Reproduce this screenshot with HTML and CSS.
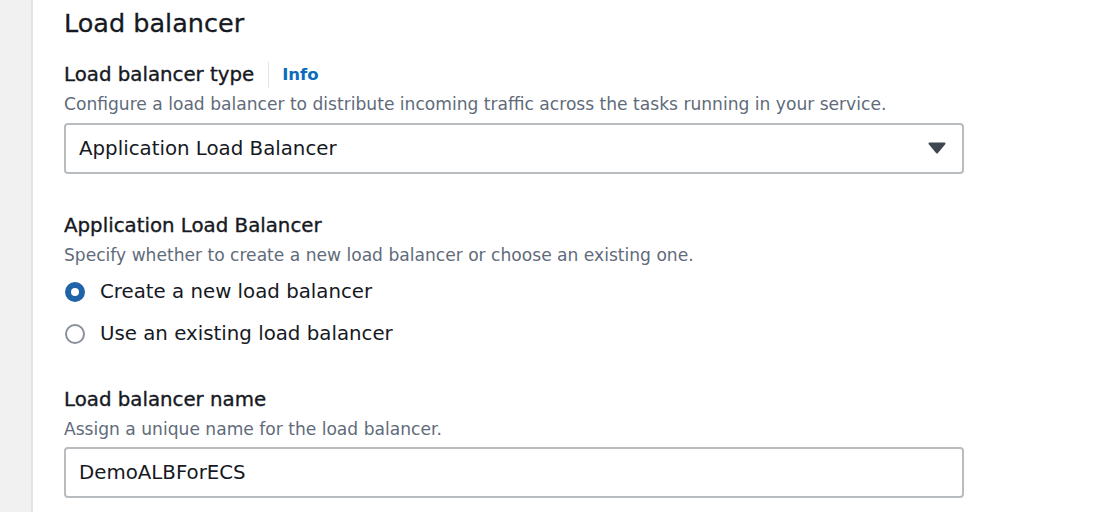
FILE: index.html
```
<!DOCTYPE html>
<html>
<head>
<meta charset="utf-8">
<link rel="stylesheet" href="styles.css">
</head>
<body>
<div class="page">
  <div class="rail"></div>
  <div class="panel">
    <h2 class="title">Load balancer</h2>

    <div class="field f1">
      <div class="label">Load balancer type <span class="sep"></span><a class="info">Info</a></div>
      <div class="desc">Configure a load balancer to distribute incoming traffic across the tasks running in your service.</div>
      <div class="select">
        <span>Application Load Balancer</span>
        <svg class="caret" width="18" height="12" viewBox="0 0 18 12"><path d="M1.5 1.5 L16.5 1.5 L9 10.5 Z" fill="#414750" stroke="#414750" stroke-width="2" stroke-linejoin="round"/></svg>
      </div>
    </div>

    <div class="field f2">
      <div class="label">Application Load Balancer</div>
      <div class="desc">Specify whether to create a new load balancer or choose an existing one.</div>
      <div class="radios">
        <div class="radio"><span class="dot on"></span><span>Create a new load balancer</span></div>
        <div class="radio"><span class="dot"></span><span>Use an existing load balancer</span></div>
      </div>
    </div>

    <div class="field f3">
      <div class="label">Load balancer name</div>
      <div class="desc">Assign a unique name for the load balancer.</div>
      <div class="input">DemoALBForECS</div>
    </div>
  </div>
</div>
</body>
</html>
```
FILE: styles.css
```
* { box-sizing: border-box; }
html, body { margin: 0; padding: 0; background: #fff; }
body { font-family: "DejaVu Sans", "Open Sans", sans-serif; color: #16191f; }
.page { display: flex; width: 1114px; height: 512px; overflow: hidden; }
.rail { width: 33px; flex: none; background: #f1f1f1; border-right: 2px solid #e3e3e3; }
.panel { flex: none; width: 930px; padding-left: 31px; }
.title { margin: 6px 0 0; font-size: 25.5px; font-weight: 400; line-height: 34px; color: #16191f; -webkit-text-stroke: 0.3px #16191f; }
.field { display: flex; flex-direction: column; }
.f1 { margin-top: 22px; }
.f2 { margin-top: 39px; }
.f3 { margin-top: 39px; }
.label { font-size: 19.8px; line-height: 26px; font-weight: 400; display: flex; align-items: center; -webkit-text-stroke: 0.35px #16191f; }
.sep { display: inline-block; width: 1px; height: 26px; background: #e4e4e4; margin: 0 13px 0 14px; }
.info { color: #0a6cbd; font-weight: 700; font-size: 16.5px; -webkit-text-stroke: 0; }
.desc { font-size: 17.1px; line-height: 22px; color: #5f6b7a; margin-top: 5px; }
.select, .input { margin-top: 8px; width: 900px; height: 51px; border: 2px solid #b8bcbf; border-radius: 4px; display: flex; align-items: center; justify-content: space-between; padding: 0 16px 0 13px; font-size: 19.8px; color: #16191f; }
.caret { margin-top: -1px; }
.radios { display: flex; flex-direction: column; gap: 14px; margin-top: 12px; }
.radio { display: flex; align-items: center; gap: 15px; font-size: 19.8px; line-height: 28px; padding-left: 1px; }
.dot { width: 20px; height: 20px; border-radius: 50%; border: 2px solid #8a9099; flex: none; }
.dot.on { border: 6px solid #1f64a8; }
.input { margin-top: 7px; }
```
